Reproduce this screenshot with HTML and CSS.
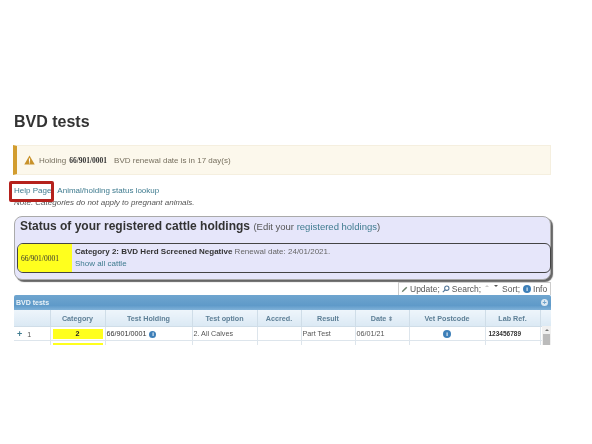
FILE: index.html
```html
<!DOCTYPE html>
<html lang="en">
<head>
<meta charset="utf-8">
<title>BVD tests</title>
<link rel="stylesheet" href="styles.css">
</head>
<body>
<main class="page">
  <h1 class="title">BVD tests</h1>
  <div class="alert">
    <svg class="warn" viewBox="0 0 16 14" width="11" height="10"><path d="M8 0.5 L15.6 13.5 H0.4 Z" fill="#c8922a"/><rect x="7.2" y="4.6" width="1.6" height="5" fill="#fff"/><rect x="7.2" y="10.4" width="1.6" height="1.6" fill="#fff"/></svg>
    <span>Holding</span><b class="alert-holding">66/901/0001</b><span>BVD renewal date is in 17 day(s)</span>
  </div>
  <div class="links">
    <span class="highlight"></span>
    <a href="#">Help Page</a><a href="#">Animal/holding status lookup</a>
  </div>
  <p class="note">Note: Categories do not apply to pregnant animals.</p>
  <section class="status">
    <h2 class="status-title">Status of your registered cattle holdings <span class="status-edit">(Edit your <a href="#">registered holdings</a>)</span></h2>
    <div class="holding">
      <div class="holding-id">66/901/0001</div>
      <div class="holding-info">
        <div><b>Category 2: BVD Herd Screened Negative</b> Renewal date: 24/01/2021.</div>
        <a href="#">Show all cattle</a>
      </div>
    </div>
  </section>
  <div class="toolbar-row">
    <div class="legend">
      <svg viewBox="0 0 10 10" width="7" height="7"><path d="M1 9 L2 6.5 L7.5 1 L9 2.5 L3.5 8 Z" fill="#6a7f6a"/></svg><span>Update;</span>
      <svg viewBox="0 0 10 10" width="8" height="8"><circle cx="6" cy="4" r="2.7" fill="none" stroke="#4f7396" stroke-width="1.3"/><path d="M4 6 L1 9" stroke="#4f7396" stroke-width="1.5"/></svg><span>Search;</span>
      <span class="carets"><i class="caret-up"></i><i class="caret-down"></i></span><span>Sort;</span>
      <span class="info">i</span><span>Info</span>
    </div>
  </div>
  <section class="grid">
    <div class="grid-bar"><span>BVD tests</span><span class="grid-toggle">+</span></div>
    <div class="grid-body">
      <table class="data">
        <colgroup>
          <col class="c-exp"><col class="c-cat"><col class="c-hold"><col class="c-opt"><col class="c-acc"><col class="c-res"><col class="c-date"><col class="c-vet"><col class="c-lab"><col class="c-end">
        </colgroup>
        <thead>
          <tr><th></th><th>Category</th><th>Test Holding</th><th>Test option</th><th>Accred.</th><th>Result</th><th>Date <span class="sort">⬍</span></th><th>Vet Postcode</th><th>Lab Ref.</th><th></th></tr>
        </thead>
        <tbody>
          <tr><td><span class="plus">+</span> 1</td><td class="cat"><span>2</span></td><td class="dark">66/901/0001 <span class="info">i</span></td><td>2. All Calves</td><td></td><td>Part Test</td><td>06/01/21</td><td class="center"><span class="info big">i</span></td><td class="dark bold">123456789</td><td></td></tr>
          <tr><td><span class="plus">+</span> 2</td><td class="cat"><span>2</span></td><td class="dark">72/041/0001 <span class="info">i</span></td><td>2. All Calves</td><td></td><td>Part Test</td><td>06/01/21</td><td>BA4 6RX <span class="info">i</span></td><td class="dark bold">72041001</td><td></td></tr>
        </tbody>
      </table>
      <div class="scrollbar"><span class="scroll-arrow"></span><span class="scroll-thumb"></span></div>
    </div>
  </section>
</main>
</body>
</html>
```
FILE: styles.css
```css
html, body { margin: 0; padding: 0; background: #fff; }
body { font-family: "Liberation Sans", Arial, sans-serif; color: #444; width: 592px; height: 444px; overflow: hidden; }
a { color: #3f7b8f; text-decoration: none; }
.page { padding: 112px 41px 0 14px; filter: blur(0.3px); }
.title { margin: 0; font-size: 16px; line-height: 20px; font-weight: bold; color: #333; }
.alert { margin: 13px 0 0 -1px; height: 30px; box-sizing: border-box; background: #fcf8ec; border: 1px solid #f5efdf; border-left: 4px solid #d29d2f; display: flex; align-items: center; padding-left: 7px; font-size: 8px; color: #77705f; }
.warn { margin-right: 4px; }
.alert-holding { font-family: "Liberation Serif", serif; font-size: 7.5px; color: #333; margin: 0 7px 0 3px; }
.links { position: relative; margin-top: 10px; height: 11px; line-height: 11px; font-size: 8px; }
.links a { position: relative; z-index: 2; }
.links a + a { margin-left: 6px; }
.highlight { position: absolute; z-index: 1; left: -5px; top: -4px; width: 39px; height: 15px; border: 3px solid #b5211c; border-radius: 2px; background: #fff; }
.note { margin: 1px 0 0; height: 11px; line-height: 11px; font-size: 8px; font-style: italic; color: #555; }
.status { margin-top: 8px; height: 64px; box-sizing: border-box; background: #e6e6fa; border: 1px solid #aaa; border-radius: 8px; box-shadow: 2px 2px 1px #666; padding-left: 2px; }
.status-title { margin: 0; padding: 0 0 0 3px; height: 26px; box-sizing: border-box; line-height: 18px; font-size: 12px; font-weight: bold; color: #333; white-space: nowrap; }
.status-edit { font-size: 9.5px; font-weight: normal; color: #555; }
.holding { display: flex; height: 30px; box-sizing: border-box; border: 1px solid #444; border-radius: 6px; overflow: hidden; margin-right: -1px; }
.holding-id { width: 54px; background: #ffff1e; font-family: "Liberation Serif", serif; font-size: 7.5px; color: #333; display: flex; align-items: center; padding-left: 3px; box-sizing: border-box; }
.holding-info { padding: 2px 0 0 3px; font-size: 8px; line-height: 12px; color: #666; }
.holding-info b { color: #333; }
.toolbar-row { display: flex; justify-content: flex-end; margin-top: 2px; }
.legend { height: 13px; width: 153px; box-sizing: border-box; border: 1px solid #ccc; border-bottom: 0; background: #fff; display: flex; align-items: center; gap: 2px; padding-left: 2px; font-size: 8.5px; color: #555; white-space: nowrap; }
.carets { display: inline-flex; gap: 5px; margin: 0 2px 0 2px; align-items: flex-start; height: 8px; }
.caret-up, .caret-down { display: block; width: 0; height: 0; border-left: 2px solid transparent; border-right: 2px solid transparent; }
.caret-up { border-bottom: 2px solid #ccc; }
.caret-down { border-top: 2px solid #555; }
.info { display: inline-block; width: 7px; height: 7px; border-radius: 50%; background: #3d7fb8; color: #fff; font-size: 6px; line-height: 7px; text-align: center; font-weight: bold; }
.dark .info { margin-left: 1px; }
.legend .info { width: 8px; height: 8px; line-height: 8px; margin-left: 1px; }
.info.big { width: 8px; height: 8px; line-height: 8px; }
.grid-bar { height: 15px; background: linear-gradient(#6fa5cf, #5f9ac9 70%, #7fb1d8); display: flex; justify-content: space-between; align-items: center; padding: 0 3px 0 2px; font-size: 7px; font-weight: bold; color: #e9f2f8; border-radius: 2px 2px 0 0; }
.grid-toggle { width: 7px; height: 7px; border-radius: 50%; background: #dbe8f2; color: #6fa3cb; font-size: 7px; line-height: 7px; text-align: center; }
.grid-body { position: relative; height: 35px; overflow: hidden; }
.data { border-collapse: collapse; table-layout: fixed; width: 537px; font-size: 7.2px; }
.c-exp { width: 36px; } .c-cat { width: 55px; } .c-hold { width: 87px; } .c-opt { width: 65px; } .c-acc { width: 44px; } .c-res { width: 54px; } .c-date { width: 54px; } .c-vet { width: 76px; } .c-lab { width: 55px; } .c-end { width: 11px; }
.data th { height: 16px; padding: 0; background: linear-gradient(#eef5fb, #dbe9f4); border-right: 1px solid #cfdde8; border-bottom: 1px solid #cfdde8; color: #5d7f96; font-size: 7.2px; font-weight: bold; }
.sort { font-size: 6px; color: #7a93a6; }
.data td { height: 14px; padding: 0 1px; border-right: 1px solid #dde5ec; border-bottom: 1px solid #dde5ec; color: #555; white-space: nowrap; overflow: hidden; box-sizing: border-box; }
.data td.cat { padding: 1px 2px; text-align: center; font-weight: bold; color: #222; }
.cat span { display: block; background: #ffff1e; line-height: 10px; }
.plus { color: #3f7b8f; font-weight: bold; margin: 0 3px 0 2px; font-size: 9px; }
.data td.dark { color: #333; }
.data td.bold { font-weight: bold; font-size: 6.5px; padding-left: 3px; }
.data td.center { text-align: center; }
.scrollbar { position: absolute; right: 0; top: 16px; width: 9px; height: 19px; background: #f0f0f0; display: flex; flex-direction: column; align-items: center; }
.scroll-arrow { margin-top: 3px; width: 0; height: 0; border-left: 2px solid transparent; border-right: 2px solid transparent; border-bottom: 2px solid #777; }
.scroll-thumb { margin-top: 3px; width: 7px; flex: 1; background: #bbb; }
```
